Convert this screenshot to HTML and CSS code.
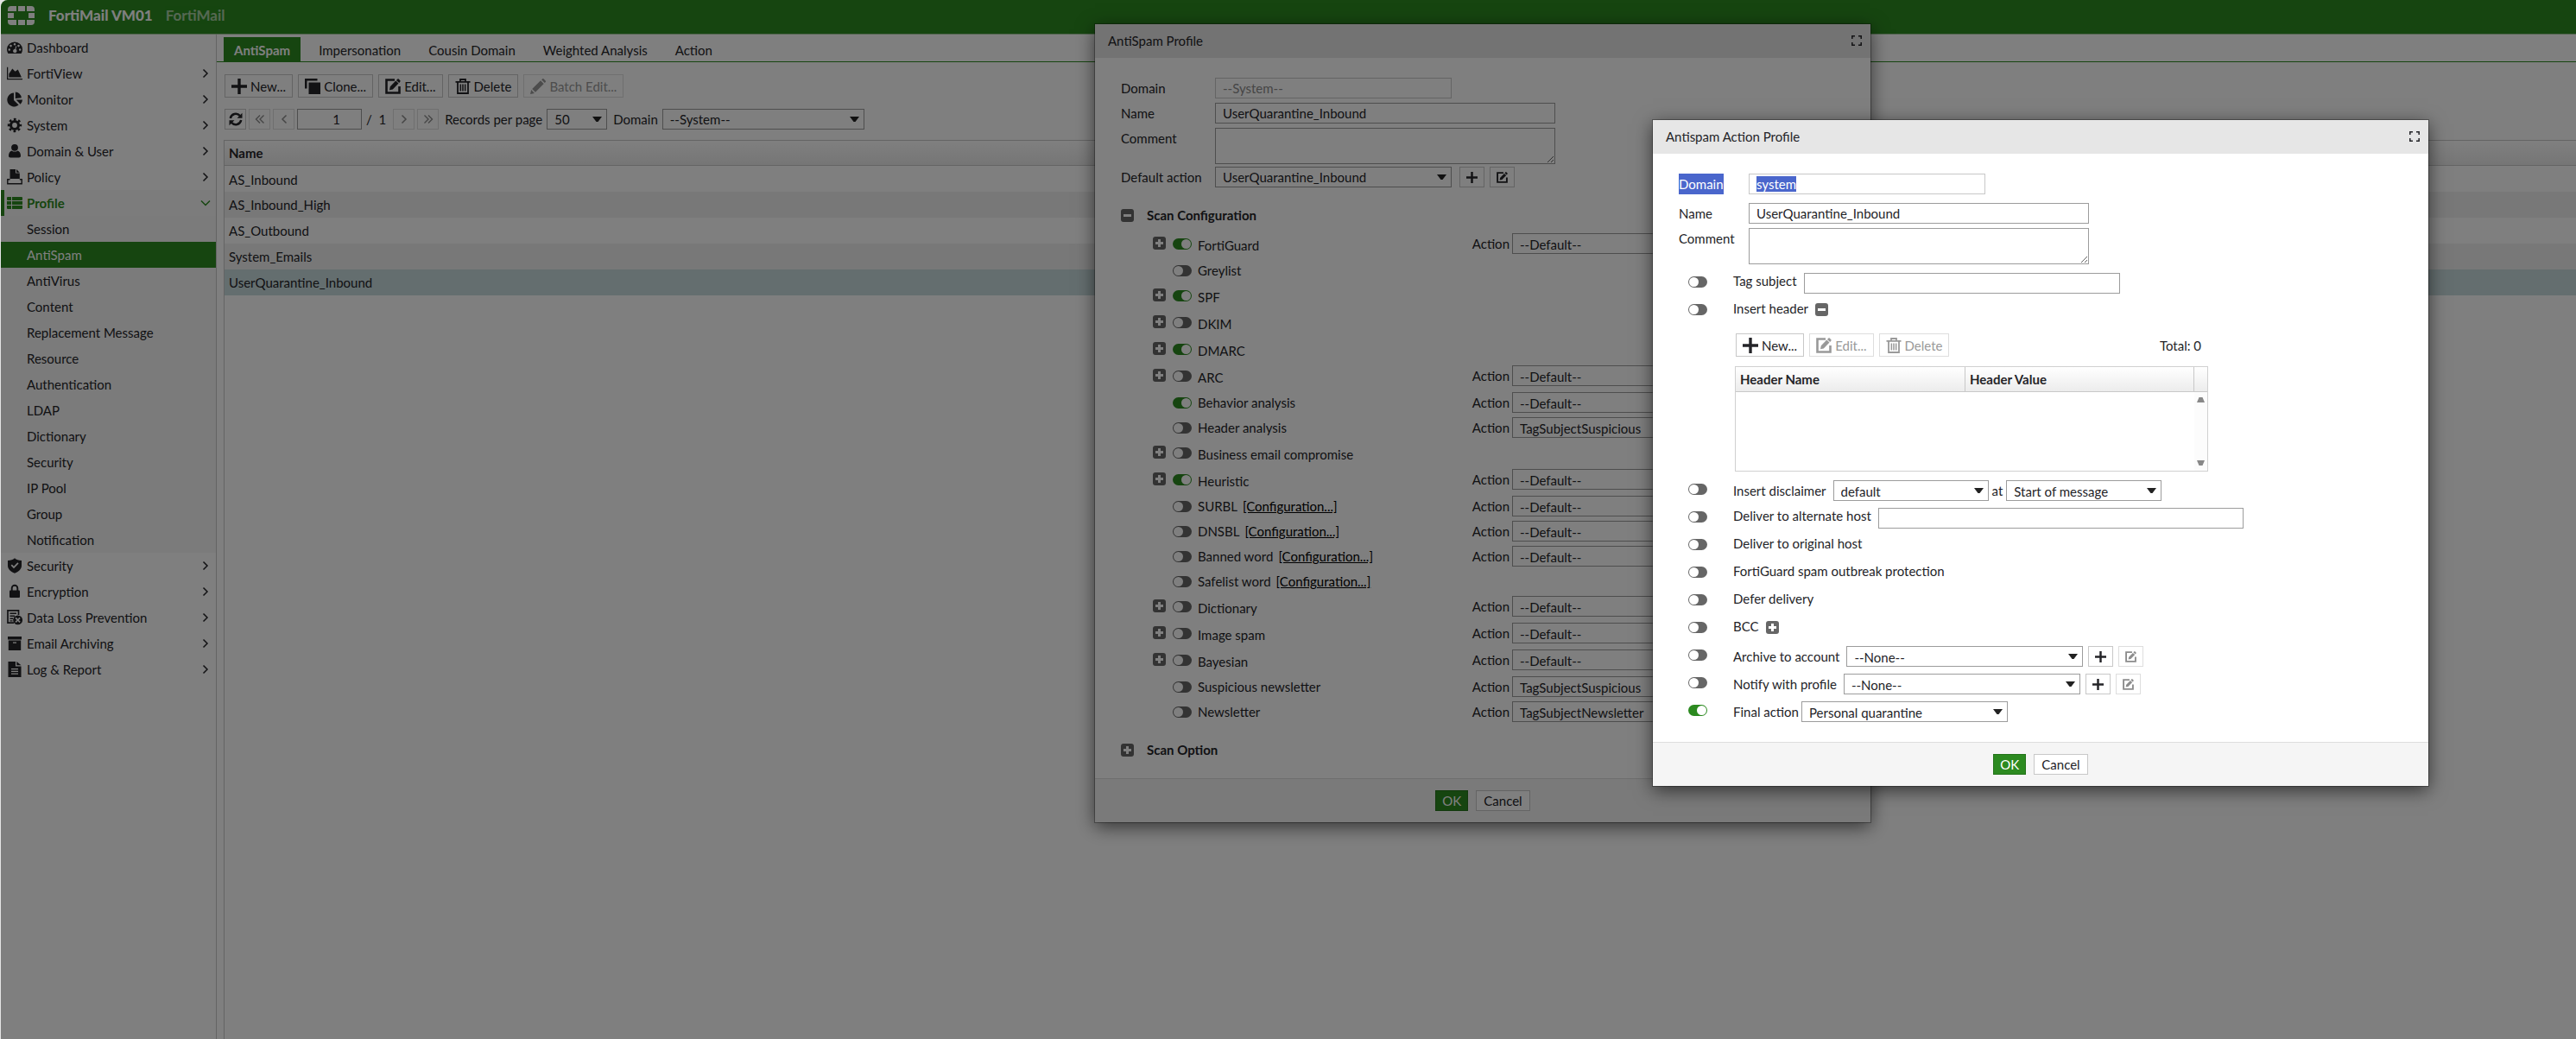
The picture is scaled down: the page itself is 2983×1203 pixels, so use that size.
FILE: index.html
```html
<!DOCTYPE html>
<html lang="en">
<head>
<meta charset="utf-8">
<title>FortiMail VM01</title>
<link rel="stylesheet" href="styles.css">
</head>
<body>
<svg class="sprite" aria-hidden="true">
  <symbol id="i-gauge" viewBox="0 0 18 18"><path fill-rule="evenodd" d="M9 2.5a9 8.6 0 0 0-9 8.6c0 1.8.5 3.400 1.400 4.900h15.200a8.600 8.600 0 0 0 1.400-4.900A9 8.600 0 0 0 9 2.500zM9 4a1.300 1.300 0 1 1 0 2.600A1.300 1.300 0 0 1 9 4zM4.500 5.800a1.300 1.300 0 1 1 0 2.600 1.300 1.300 0 0 1 0-2.600zM2.800 10.200a1.300 1.300 0 1 1 0 2.600 1.300 1.300 0 0 1 0-2.600zM15.200 10.200a1.300 1.300 0 1 1 0 2.600 1.300 1.300 0 0 1 0-2.600zM13.500 5.800a1.300 1.300 0 1 1 0 2.600 1.300 1.300 0 0 1 0-2.600zM10.300 7.200l1 .3-.9 3.600a2.200 2.200 0 1 1-1-.3z"/></symbol>
  <symbol id="i-area" viewBox="0 0 20 18"><path d="M0 1h1.400v14.600H20V17H0zM2.600 14V9.500L7 3l3.600 3.600L14.200 4l4.600 10z"/></symbol>
  <symbol id="i-pie" viewBox="0 0 18 18"><path d="M8 1.500V10l5.600 5.500A8 8 0 1 1 8 1.500zM9.800.5a7.500 7.500 0 0 1 7 6.700l-7 .8zM10.600 9.600H18a7.600 7.600 0 0 1-2.300 5.200z"/></symbol>
  <symbol id="i-gear" viewBox="0 0 18 18"><circle cx="9" cy="9" r="4.500" fill="none" stroke="currentColor" stroke-width="3.200"/><circle cx="9" cy="9" r="6.900" fill="none" stroke="currentColor" stroke-width="2.600" stroke-dasharray="2.700 2.719" stroke-dashoffset="1.350"/></symbol>
  <symbol id="i-user" viewBox="0 0 18 18"><circle cx="9" cy="4.800" r="3.900"/><path d="M2 14.500C2 11 3.400 9 5.600 8.400c2 1.600 4.800 1.600 6.800 0C14.600 9 16 11 16 14.500c0 1.300-.8 2-2 2H4c-1.200 0-2-.7-2-2z"/></symbol>
  <symbol id="i-policy" viewBox="0 0 18 18"><path d="M3.500 0H10v4.500h4.800V11H3.500zM11 0l3.800 3.700H11z"/><path d="M3.500 11.800H.8v5h16.400v-5h-2.400" fill="none" stroke="currentColor" stroke-width="1.400"/></symbol>
  <symbol id="i-list" viewBox="0 0 18 18"><path d="M1 2h4v4H1a1 1 0 0 1-1-1V3a1 1 0 0 1 1-1zM6 2h11a1 1 0 0 1 1 1v2a1 1 0 0 1-1 1H6zM0 7h5v4H0zM6 7h12v4H6zM0 12h5v4H1a1 1 0 0 1-1-1zM6 12h12v3a1 1 0 0 1-1 1H6z"/></symbol>
  <symbol id="i-shield" viewBox="0 0 18 18"><path fill-rule="evenodd" d="M9 .3C11 2 13.600 2.900 17 3v6c0 4-3.500 7-8 8.800C4.500 16 1 13 1 9V3c3.400-.1 6-1 8-2.700zM4.600 8.800L8 12.300l5.600-5.700-1.300-1.300L8 9.700 5.900 7.500z"/></symbol>
  <symbol id="i-lock" viewBox="0 0 18 18"><rect x="3" y="7.500" width="12" height="8.500" rx="1"/><path d="M5.700 8V5a3.300 3.300 0 0 1 6.600 0v3" fill="none" stroke="currentColor" stroke-width="1.900"/></symbol>
  <symbol id="i-dlp" viewBox="0 0 18 18"><path d="M8 15.200H1V.9h12.500V6" fill="none" stroke="currentColor" stroke-width="1.700"/><path d="M3.500 3.600H11V5H3.500zM3.500 6.600H9V8H3.500zM3.500 9.600H7V11H3.500zM3.500 12.200H6.500v1.300H3.500z"/><path fill-rule="evenodd" d="M12.600 6.400a5.400 5.400 0 1 1 0 10.900 5.400 5.400 0 0 1 0-10.900zM10.700 8.800l-1.200 1.200 2 1.900-2 1.900 1.200 1.200 1.900-2 1.900 2 1.200-1.200-2-1.900 2-1.900-1.200-1.200-1.900 2z"/></symbol>
  <symbol id="i-archive" viewBox="0 0 18 18"><path fill-rule="evenodd" d="M1 1h16v3.600H1zM1.800 5.600h14.400V17H1.800zM7 7.400v1.400h4V7.400z"/></symbol>
  <symbol id="i-log" viewBox="0 0 18 18"><path fill-rule="evenodd" d="M1.500 0H10v5.500h6.500V18h-15zM5 8v1.300h8V8zM5 10.800v1.300h8v-1.300zM5 13.500v1.300h8v-1.300zM11.300 0l5.200 4.300h-5.200z"/></symbol>
  <symbol id="i-right" viewBox="0 0 8 12"><path d="M1.500 1.500L6 6l-4.500 4.500" fill="none" stroke="currentColor" stroke-width="1.500"/></symbol>
  <symbol id="i-left" viewBox="0 0 8 12"><path d="M6.500 1.500L2 6l4.500 4.500" fill="none" stroke="currentColor" stroke-width="1.500"/></symbol>
  <symbol id="i-first" viewBox="0 0 12 12"><path d="M6 1.500L1.500 6 6 10.500M10.500 1.500L6 6l4.500 4.500" fill="none" stroke="currentColor" stroke-width="1.400"/></symbol>
  <symbol id="i-last" viewBox="0 0 12 12"><path d="M1.500 1.500L6 6l-4.500 4.500M6 1.500L10.500 6 6 10.500" fill="none" stroke="currentColor" stroke-width="1.400"/></symbol>
  <symbol id="i-down" viewBox="0 0 12 8"><path d="M1 1.500l5 5 5-5" fill="none" stroke="currentColor" stroke-width="1.500"/></symbol>
  <symbol id="i-plus" viewBox="0 0 18 18"><path d="M7.300 0h3.400v7.300H18v3.400h-7.300V18H7.300v-7.300H0V7.300h7.300z"/></symbol>
  <symbol id="i-clone" viewBox="0 0 18 18"><path d="M0 0h14.500v2.500H2.500v9H0zM4.500 4.500H18V18H4.500z"/></symbol>
  <symbol id="i-edit" viewBox="0 0 18 18"><path d="M11 1.500H1.500v15h15V9" fill="none" stroke="currentColor" stroke-width="2.600"/><path d="M5 13.200l.8-3.900 6.500-6.700 3.200 3-6.700 6.800zM13 1.900l1.400-1.400c.4-.4.900-.4 1.300 0l1.700 1.700c.4.4.4.900 0 1.300L16.200 4.900z"/></symbol>
  <symbol id="i-trash" viewBox="0 0 18 18"><path d="M.5 3.800h17M6 3.500V1h6v2.500M3 4v13h12V4" fill="none" stroke="currentColor" stroke-width="1.800"/><path d="M5.600 6.500h1.500v8H5.600zM8.250 6.500h1.500v8h-1.500zM10.900 6.500h1.500v8h-1.500z"/></symbol>
  <symbol id="i-pencil" viewBox="0 0 18 18"><path d="M0 18l1.200-5L4.900 17zM2.200 12L12 2.300l3.700 3.700L6 15.800zM13.100 1.300L14 .4c.5-.5 1.200-.5 1.700 0l2 2c.4.500.4 1.100 0 1.600l-.9 1z"/></symbol>
  <symbol id="i-refresh" viewBox="0 0 16 16"><path d="M1.800 7A6.300 6.300 0 0 1 12.800 4M14.200 9A6.300 6.300 0 0 1 3.200 12" fill="none" stroke="currentColor" stroke-width="2.500"/><path d="M15.500.8v6H9.500zM.5 15.200v-6h6z"/></symbol>
  <symbol id="i-full" viewBox="0 0 12 12"><path d="M.8 4V.8H4M8 .8h3.200V4M11.200 8v3.200H8M4 11.200H.8V8" fill="none" stroke="currentColor" stroke-width="1.500"/></symbol>
  <symbol id="i-up-tri" viewBox="0 0 9 6"><path d="M2.500 0h4L9 6H0z"/></symbol>
  <symbol id="i-down-tri" viewBox="0 0 9 6"><path d="M0 0h9L6.500 6h-4z"/></symbol>
</svg>

<div class="screen">
  <header class="topbar">
    <svg class="logo" viewBox="0 0 31 22" role="img" aria-label="Fortinet"><path d="M4 0h6v6H0V4a4 4 0 0 1 4-4zM12 0h8v6h-8zM22 0h5a4 4 0 0 1 4 4v2h-9zM0 8h7v6H0zM24 8h7v6h-7zM0 16h10v6H4a4 4 0 0 1-4-4zM12 16h8v6h-8zM22 16h9v2a4 4 0 0 1-4 4h-5z"/></svg>
    <strong>FortiMail VM01</strong><span>FortiMail</span>
  </header>

  <div class="columns">
    <nav class="sidebar">
      <a class="item" href="#"><svg class="ic"><use href="#i-gauge"/></svg>Dashboard</a>
      <a class="item" href="#"><svg class="ic"><use href="#i-area"/></svg>FortiView<svg class="chev"><use href="#i-right"/></svg></a>
      <a class="item" href="#"><svg class="ic"><use href="#i-pie"/></svg>Monitor<svg class="chev"><use href="#i-right"/></svg></a>
      <a class="item" href="#"><svg class="ic"><use href="#i-gear"/></svg>System<svg class="chev"><use href="#i-right"/></svg></a>
      <a class="item" href="#"><svg class="ic"><use href="#i-user"/></svg>Domain &amp; User<svg class="chev"><use href="#i-right"/></svg></a>
      <a class="item" href="#"><svg class="ic"><use href="#i-policy"/></svg>Policy<svg class="chev"><use href="#i-right"/></svg></a>
      <a class="item open" href="#"><svg class="ic"><use href="#i-list"/></svg>Profile<svg class="chev down"><use href="#i-down"/></svg></a>
      <div class="sub">
        <a class="item" href="#">Session</a>
        <a class="item current" href="#">AntiSpam</a>
        <a class="item" href="#">AntiVirus</a>
        <a class="item" href="#">Content</a>
        <a class="item" href="#">Replacement Message</a>
        <a class="item" href="#">Resource</a>
        <a class="item" href="#">Authentication</a>
        <a class="item" href="#">LDAP</a>
        <a class="item" href="#">Dictionary</a>
        <a class="item" href="#">Security</a>
        <a class="item" href="#">IP Pool</a>
        <a class="item" href="#">Group</a>
        <a class="item" href="#">Notification</a>
      </div>
      <a class="item" href="#"><svg class="ic"><use href="#i-shield"/></svg>Security<svg class="chev"><use href="#i-right"/></svg></a>
      <a class="item" href="#"><svg class="ic"><use href="#i-lock"/></svg>Encryption<svg class="chev"><use href="#i-right"/></svg></a>
      <a class="item" href="#"><svg class="ic"><use href="#i-dlp"/></svg>Data Loss Prevention<svg class="chev"><use href="#i-right"/></svg></a>
      <a class="item" href="#"><svg class="ic"><use href="#i-archive"/></svg>Email Archiving<svg class="chev"><use href="#i-right"/></svg></a>
      <a class="item" href="#"><svg class="ic"><use href="#i-log"/></svg>Log &amp; Report<svg class="chev"><use href="#i-right"/></svg></a>
    </nav>

    <main class="content">
      <div class="tabs">
        <a class="tab active" href="#">AntiSpam</a>
        <a class="tab" href="#">Impersonation</a>
        <a class="tab" href="#">Cousin Domain</a>
        <a class="tab" href="#">Weighted Analysis</a>
        <a class="tab" href="#">Action</a>
      </div>
      <div class="toolbar">
        <button class="tool"><svg><use href="#i-plus"/></svg>New...</button>
        <button class="tool"><svg><use href="#i-clone"/></svg>Clone...</button>
        <button class="tool"><svg><use href="#i-edit"/></svg>Edit...</button>
        <button class="tool"><svg><use href="#i-trash"/></svg>Delete</button>
        <button class="tool" disabled><svg><use href="#i-pencil"/></svg>Batch Edit...</button>
      </div>
      <div class="pager">
        <button class="page" aria-label="Refresh"><svg class="p16"><use href="#i-refresh"/></svg></button>
        <button class="page" disabled aria-label="First page"><svg class="p12"><use href="#i-first"/></svg></button>
        <button class="page" disabled aria-label="Previous page"><svg class="p12"><use href="#i-left"/></svg></button>
        <input class="pageno" type="text" value="1" aria-label="Page">
        <span class="of">/&nbsp; 1</span>
        <button class="page" disabled aria-label="Next page"><svg class="p12"><use href="#i-right"/></svg></button>
        <button class="page" disabled aria-label="Last page"><svg class="p12"><use href="#i-last"/></svg></button>
        <label class="plabel" for="rpp">Records per page</label>
        <select class="w70" id="rpp"><option>50</option></select>
        <label class="plabel" for="dom">Domain</label>
        <select class="w234" id="dom"><option>--System--</option></select>
      </div>
      <div class="listbox">
        <table class="list">
          <thead><tr><th>Name</th></tr></thead>
          <tbody>
            <tr><td>AS_Inbound</td></tr>
            <tr><td>AS_Inbound_High</td></tr>
            <tr><td>AS_Outbound</td></tr>
            <tr><td>System_Emails</td></tr>
            <tr class="selected"><td>UserQuarantine_Inbound</td></tr>
          </tbody>
        </table>
      </div>
    </main>
  </div>

  <section class="window profile" aria-label="AntiSpam Profile">
    <header class="title">AntiSpam Profile<button class="full" aria-label="Maximize"><svg><use href="#i-full"/></svg></button></header>
    <div class="body">
      <div class="field"><label for="p-domain">Domain</label><input class="w274" id="p-domain" type="text" value="--System--" disabled></div>
      <div class="field"><label for="p-name">Name</label><input class="w394" id="p-name" type="text" value="UserQuarantine_Inbound"></div>
      <div class="field area"><label for="p-comment">Comment</label><textarea class="w394" id="p-comment"></textarea></div>
      <div class="field"><label for="p-action">Default action</label><select class="w274" id="p-action"><option>UserQuarantine_Inbound</option></select><button class="mini" aria-label="New"><svg><use href="#i-plus"/></svg></button><button class="mini" aria-label="Edit"><svg><use href="#i-edit"/></svg></button></div>

      <h2 class="section"><button class="box minus" aria-label="Collapse"></button>Scan Configuration</h2>
      <div class="scans">
        <div class="scan more"><button class="box" aria-label="Expand"></button><input class="toggle" type="checkbox" id="s1" checked><label for="s1">FortiGuard</label><label class="act" for="a1">Action</label><select class="w274" id="a1"><option>--Default--</option></select></div>
        <div class="scan"><input class="toggle" type="checkbox" id="s2"><label for="s2">Greylist</label></div>
        <div class="scan more"><button class="box" aria-label="Expand"></button><input class="toggle" type="checkbox" id="s3" checked><label for="s3">SPF</label></div>
        <div class="scan more"><button class="box" aria-label="Expand"></button><input class="toggle" type="checkbox" id="s4"><label for="s4">DKIM</label></div>
        <div class="scan more"><button class="box" aria-label="Expand"></button><input class="toggle" type="checkbox" id="s5" checked><label for="s5">DMARC</label></div>
        <div class="scan more"><button class="box" aria-label="Expand"></button><input class="toggle" type="checkbox" id="s6"><label for="s6">ARC</label><label class="act" for="a6">Action</label><select class="w274" id="a6"><option>--Default--</option></select></div>
        <div class="scan"><input class="toggle" type="checkbox" id="s7" checked><label for="s7">Behavior analysis</label><label class="act" for="a7">Action</label><select class="w274" id="a7"><option>--Default--</option></select></div>
        <div class="scan"><input class="toggle" type="checkbox" id="s8"><label for="s8">Header analysis</label><label class="act" for="a8">Action</label><select class="w274" id="a8"><option>TagSubjectSuspicious</option></select></div>
        <div class="scan more"><button class="box" aria-label="Expand"></button><input class="toggle" type="checkbox" id="s9"><label for="s9">Business email compromise</label></div>
        <div class="scan more"><button class="box" aria-label="Expand"></button><input class="toggle" type="checkbox" id="s10" checked><label for="s10">Heuristic</label><label class="act" for="a10">Action</label><select class="w274" id="a10"><option>--Default--</option></select></div>
        <div class="scan"><input class="toggle" type="checkbox" id="s11"><label for="s11">SURBL</label><a href="#">[Configuration...]</a><label class="act" for="a11">Action</label><select class="w274" id="a11"><option>--Default--</option></select></div>
        <div class="scan"><input class="toggle" type="checkbox" id="s12"><label for="s12">DNSBL</label><a href="#">[Configuration...]</a><label class="act" for="a12">Action</label><select class="w274" id="a12"><option>--Default--</option></select></div>
        <div class="scan"><input class="toggle" type="checkbox" id="s13"><label for="s13">Banned word</label><a href="#">[Configuration...]</a><label class="act" for="a13">Action</label><select class="w274" id="a13"><option>--Default--</option></select></div>
        <div class="scan"><input class="toggle" type="checkbox" id="s14"><label for="s14">Safelist word</label><a href="#">[Configuration...]</a></div>
        <div class="scan more"><button class="box" aria-label="Expand"></button><input class="toggle" type="checkbox" id="s15"><label for="s15">Dictionary</label><label class="act" for="a15">Action</label><select class="w274" id="a15"><option>--Default--</option></select></div>
        <div class="scan more"><button class="box" aria-label="Expand"></button><input class="toggle" type="checkbox" id="s16"><label for="s16">Image spam</label><label class="act" for="a16">Action</label><select class="w274" id="a16"><option>--Default--</option></select></div>
        <div class="scan more"><button class="box" aria-label="Expand"></button><input class="toggle" type="checkbox" id="s17"><label for="s17">Bayesian</label><label class="act" for="a17">Action</label><select class="w274" id="a17"><option>--Default--</option></select></div>
        <div class="scan"><input class="toggle" type="checkbox" id="s18"><label for="s18">Suspicious newsletter</label><label class="act" for="a18">Action</label><select class="w274" id="a18"><option>TagSubjectSuspicious</option></select></div>
        <div class="scan"><input class="toggle" type="checkbox" id="s19"><label for="s19">Newsletter</label><label class="act" for="a19">Action</label><select class="w274" id="a19"><option>TagSubjectNewsletter</option></select></div>
      </div>
      <h2 class="section"><button class="box" aria-label="Expand"></button>Scan Option</h2>
    </div>
    <footer class="actions"><button class="ok">OK</button><button class="cancel">Cancel</button></footer>
  </section>

  <div class="mask"></div>

  <section class="window action" aria-label="Antispam Action Profile">
    <header class="title">Antispam Action Profile<button class="full" aria-label="Maximize"><svg><use href="#i-full"/></svg></button></header>
    <div class="body">
      <div class="field first"><label for="q-domain"><span class="picked">Domain</span></label><input class="w274 picked-value" id="q-domain" type="text" value="system" readonly></div>
      <div class="field"><label for="q-name">Name</label><input class="w394" id="q-name" type="text" value="UserQuarantine_Inbound"></div>
      <div class="field area"><label for="q-comment">Comment</label><textarea class="w394" id="q-comment"></textarea></div>

      <div class="rule"><input class="toggle" type="checkbox" id="r1" aria-label="Enable tag subject"><label for="tag">Tag subject</label><input class="w366" id="tag" type="text"></div>
      <div class="rule"><input class="toggle" type="checkbox" id="r2"><label for="r2">Insert header</label><button class="box minus" aria-label="Collapse"></button></div>

      <div class="headers">
        <div class="headtools">
          <button class="tool"><svg><use href="#i-plus"/></svg>New...</button>
          <button class="tool" disabled><svg><use href="#i-edit"/></svg>Edit...</button>
          <button class="tool" disabled><svg><use href="#i-trash"/></svg>Delete</button>
          <span class="total">Total: 0</span>
        </div>
        <div class="headbox">
          <table><thead><tr><th>Header Name</th><th>Header Value</th><th class="gutter"></th></tr></thead></table>
          <div class="scroll"><svg><use href="#i-up-tri"/></svg><svg><use href="#i-down-tri"/></svg></div>
        </div>
      </div>

      <div class="rule pick"><input class="toggle" type="checkbox" id="r3" aria-label="Enable disclaimer"><label for="disc">Insert disclaimer</label><select class="w180" id="disc"><option>default</option></select><label class="at" for="pos">at</label><select class="w180" id="pos"><option>Start of message</option></select></div>
      <div class="rule"><input class="toggle" type="checkbox" id="r4" aria-label="Enable alternate host"><label for="alt">Deliver to alternate host</label><input class="w423" id="alt" type="text"></div>
      <div class="rule"><input class="toggle" type="checkbox" id="r5"><label for="r5">Deliver to original host</label></div>
      <div class="rule"><input class="toggle" type="checkbox" id="r6"><label for="r6">FortiGuard spam outbreak protection</label></div>
      <div class="rule"><input class="toggle" type="checkbox" id="r7"><label for="r7">Defer delivery</label></div>
      <div class="rule"><input class="toggle" type="checkbox" id="r8"><label for="r8">BCC</label><button class="box" aria-label="Expand"></button></div>
      <div class="rule pick"><input class="toggle" type="checkbox" id="r9" aria-label="Enable archive"><label for="arch">Archive to account</label><select class="w274" id="arch"><option>--None--</option></select><button class="mini" aria-label="New"><svg><use href="#i-plus"/></svg></button><button class="mini" disabled aria-label="Edit"><svg><use href="#i-edit"/></svg></button></div>
      <div class="rule pick"><input class="toggle" type="checkbox" id="r10" aria-label="Enable notification"><label for="noti">Notify with profile</label><select class="w274" id="noti"><option>--None--</option></select><button class="mini" aria-label="New"><svg><use href="#i-plus"/></svg></button><button class="mini" disabled aria-label="Edit"><svg><use href="#i-edit"/></svg></button></div>
      <div class="rule pick tight"><input class="toggle" type="checkbox" id="r11" checked aria-label="Enable final action"><label for="fin">Final action</label><select class="w239" id="fin"><option>Personal quarantine</option></select></div>
    </div>
    <footer class="actions"><button class="ok">OK</button><button class="cancel">Cancel</button></footer>
  </section>
</div>
</body>
</html>
```
FILE: styles.css
```css
:root {
  --green: #2c8a20;
  --ink: #242428;
  --line: #c8c8c8;
}

* { box-sizing: border-box; }

body {
  margin: 0;
  background: #e4e4e4;
  color: var(--ink);
  font: 15px/20px Lato, "Open Sans", sans-serif;
}

svg { display: block; fill: currentColor; flex: none; }
.sprite { position: absolute; width: 0; height: 0; }

a { color: inherit; text-decoration: none; }
button, input, select, textarea { font: inherit; color: inherit; margin: 0; }
button { display: flex; align-items: center; justify-content: center; border-radius: 0; padding: 0; }

.screen {
  position: relative;
  display: flex;
  flex-direction: column;
  min-height: 100vh;
  margin-left: 1px;
  overflow: hidden;
  border-top-left-radius: 8px;
  background: #fff;
}

/* Top bar */
.topbar {
  display: flex;
  align-items: center;
  height: 40px;
  padding: 0 8px 4px;
  border-bottom: 1px solid #a4c89f;
  background: var(--green);
  color: #fff;
  font-size: 17px;
  font-weight: 700;
}
.logo { width: 31px; height: 22px; margin-right: 16px; }
.topbar span { margin-left: 15px; opacity: .6; }

.columns { display: flex; flex: 1; }

/* Navigation */
.sidebar { width: 250px; border-right: 1px solid var(--line); flex: none; }
.item { display: flex; align-items: center; height: 30px; padding: 0 8px 0 30px; }
.item .ic { width: 18px; height: 18px; margin: 0 5px 0 -23px; }
.chev { width: 8px; height: 12px; margin-left: auto; }
.chev.down { width: 12px; height: 8px; margin-right: -2px; }
.item.open {
  padding-left: 26px;
  border-left: 4px solid var(--green);
  background: #f9f9f9;
  color: var(--green);
  font-weight: 700;
}
.sub { background: #f6f6f6; }
.item.current { background: var(--green); color: #fff; }

/* Main list */
.content { display: flex; flex-direction: column; flex: 1; min-width: 0; }
.tabs { display: flex; gap: 10px; padding: 3px 8px 0; border-bottom: 1px solid var(--green); }
.tab { padding: 2px 11px 0; line-height: 26px; }
.tab.active { padding: 2px 12px 0; background: var(--green); color: #fff; font-weight: 700; }

.toolbar { display: flex; gap: 6px; padding: 14px 9px 0; }
.tool { height: 27px; padding: 0 7px; gap: 4px; border: 1px solid var(--line); background: #fff; }
.tool svg { width: 18px; height: 18px; }
.tool:disabled { border-color: #dedede; color: #999; }

.pager { display: flex; align-items: center; gap: 3px; padding: 13px 9px 12px; }
.page { width: 25px; height: 24px; border: 1px solid var(--line); background: #fff; }
.page:disabled { border-color: #dedede; color: #8c8c8c; }
.p16 { width: 16px; height: 16px; }
.p12 { width: 12px; height: 12px; }
.pageno { width: 75px; padding-right: 24px; text-align: right; }
.of { padding: 0 5px 0 2px; }
.plabel { padding: 0 2px 0 4px; }

.listbox { flex: 1; margin-left: 8px; border: 1px solid var(--line); border-width: 1px 0 0 1px; }
.list { width: 100%; border-spacing: 0; }
.list th, .headbox th {
  height: 29px;
  padding: 0 5px;
  border-bottom: 1px solid var(--line);
  background: linear-gradient(#fff, #ececec);
  text-align: left;
}
.list td { height: 30px; padding: 0 5px; }
.list tbody tr:first-child td { border-top: 1px solid #fff; }
.list tbody tr:nth-child(even) { background: #f0f0f0; }
.list tbody tr.selected { background: #c8dcde; }

/* Form controls */
input[type="text"], select, textarea {
  height: 24px;
  padding: 0 8px;
  border: 1px solid #9c9c9c;
  border-radius: 0;
  background: #fff;
}
input[type="text"]:disabled { border-color: var(--line); color: #8c8c8c; }
input.pageno[type="text"] { padding-right: 24px; }
textarea { display: block; height: 42px; }
select {
  appearance: none;
  background: #fff url("data:image/svg+xml,%3Csvg xmlns='http://www.w3.org/2000/svg' width='11' height='6'%3E%3Cpath fill='%23222' d='M0 0h11L6.500 6h-2z'/%3E%3C/svg%3E") no-repeat right 5px center;
}
.w70 { width: 70px; }
.w180 { width: 180px; }
.w234 { width: 234px; }
.w239 { width: 239px; }
.w274 { width: 274px; }
.w366 { width: 366px; }
.w394 { width: 394px; }
.w423 { width: 423px; }

.toggle {
  appearance: none;
  flex: none;
  width: 22px;
  height: 13px;
  border-radius: 7px;
  background: #666;
}
.toggle::before {
  content: "";
  display: block;
  width: 11px;
  height: 11px;
  margin: 1px;
  border-radius: 50%;
  background: #fff;
}
.toggle:checked { background: var(--green); }
.toggle:checked::before { margin-left: 10px; }

.box {
  flex: none;
  width: 15px;
  height: 15px;
  border: 0;
  border-radius: 3px;
  background:
    linear-gradient(#fff, #fff) center / 9px 3px no-repeat,
    linear-gradient(#fff, #fff) center / 3px 9px no-repeat,
    #666;
}
.box.minus { background: linear-gradient(#fff, #fff) center / 9px 3px no-repeat, #666; }

.mini { width: 29px; height: 24px; border: 1px solid var(--line); background: #fff; }
.mini svg { width: 13px; height: 13px; }
.mini:disabled { border-color: #dedede; color: #8c8c8c; }

/* Floating windows */
.window {
  position: absolute;
  width: 898px;
  background: #fff;
  box-shadow: 0 0 0 1px rgba(0, 0, 0, .3), 0 5px 20px rgba(0, 0, 0, .6);
}
.window.profile { left: 1267px; top: 28px; }
.window.action { left: 1913px; top: 139px; }
.mask { position: absolute; inset: 0; background: rgba(0, 0, 0, .5); }

.title {
  display: flex;
  align-items: center;
  justify-content: space-between;
  height: 39px;
  padding: 0 10px 1px 15px;
  background: #e6e6e6;
}
.full { border: 0; background: none; }
.full svg { width: 12px; height: 12px; }
.body { padding: 23px 30px; }

.field { display: flex; gap: 0 9px; margin-bottom: 5px; }
.field label { flex: none; width: 100px; line-height: 24px; }
.field.area { margin-bottom: 3px; }
.field .mini + .mini { margin-left: -3px; }
.action .field label { width: 72px; }
.action .field.first { margin-bottom: 10px; }
.action .field.area { margin-bottom: 10px; }
.picked { display: inline-block; background: #4a66cc; color: #fff; }
input.picked-value[type="text"] {
  border-color: var(--line);
  color: #fff;
  background: linear-gradient(#4a66cc, #4a66cc) 8px center / 46px 18px no-repeat, #fff;
}

.section { display: flex; align-items: center; gap: 15px; margin: 0; font-size: 15px; line-height: 20px; }
.profile .field + .section { margin-top: 22px; }

.scans { padding: 11px 0 17px 60px; }
.scan { display: flex; height: 29px; line-height: 24px; }
.scan.more { height: 31px; }
.scan .box { margin: 4px 8px 0 -23px; }
.scan .toggle { margin: 6px 7px 0 0; }
.scan.more label:not(.act) { padding-top: 2px; }
.scan a { margin-left: 6px; color: #000; text-decoration: underline; }
.scan .act { margin-left: auto; margin-right: 3px; }
.scan:has(.act) { margin-right: 111px; }

.rule { display: flex; height: 24px; margin-bottom: 8px; gap: 8px; line-height: 19px; }
.rule:last-child { margin-bottom: 0; }
.rule.pick { line-height: 24px; }
.rule.tight { gap: 3px; }
.rule .toggle { margin: 4px 0 0 11px; }
.rule .toggle + label { padding-left: 22px; }
.rule.tight .toggle + label { padding-left: 27px; }
.rule .box { margin-top: 3px; }
.rule .at { margin: 0 -4px; }
.rule .mini { margin-left: -2px; }

.headers { width: 548px; margin: 14px 0 10px 65px; }
.headtools { display: flex; align-items: center; gap: 6px; padding: 0 8px 11px 1px; }
.total { margin-left: auto; }
.headbox { display: flex; flex-direction: column; height: 122px; border: 1px solid #d0d0d0; }
.headbox table { width: 100%; table-layout: fixed; border-spacing: 0; }
.headbox th + th { border-left: 1px solid var(--line); }
.headbox .gutter { width: 16px; padding: 0; }
.scroll {
  display: flex;
  flex: 1;
  flex-direction: column;
  justify-content: space-between;
  align-self: flex-end;
  padding: 6px 3px;
  background: #fcfcfc;
  color: #888;
}
.scroll svg { width: 9px; height: 6px; }

.actions {
  display: flex;
  justify-content: center;
  gap: 9px;
  padding: 13px 0;
  border-top: 1px solid #dedede;
  background: #f5f5f5;
}
.ok, .cancel { height: 24px; padding: 0 8px; border: 1px solid var(--line); background: #fff; }
.ok { padding: 0 7px; border-color: #24731a; background: var(--green); color: #fff; }
```
